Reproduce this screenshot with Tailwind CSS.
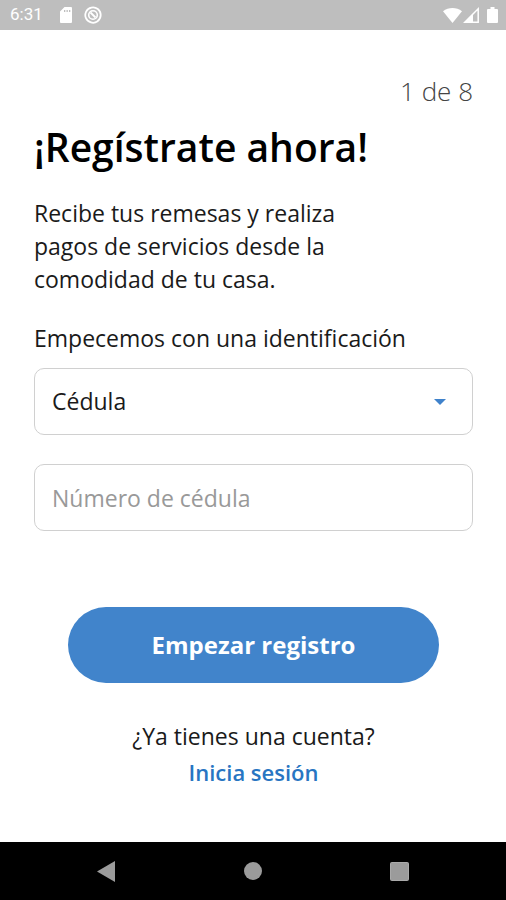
<!DOCTYPE html>
<html lang="es">
<head>
<meta charset="utf-8">
<meta name="viewport" content="width=device-width, initial-scale=1">
<title>Regístrate</title>
<script src="https://cdn.jsdelivr.net/npm/@tailwindcss/browser@4"></script>
</head>
<body class="flex min-h-screen flex-col bg-white font-['Open_Sans','Lato',sans-serif] text-[23px] text-[#1a1a1a]">
  <header class="flex h-[30px] items-center justify-between bg-[#bebebe] pr-2 pl-[10px] text-white">
    <div class="flex items-center gap-3">
      <span class="w-[38px] font-['Roboto',sans-serif] text-[17px]">6:31</span>
      <svg class="h-4 w-3" viewBox="0 0 12 16" fill="currentColor" aria-hidden="true"><path fill-rule="evenodd" d="M4.500 0H11a1 1 0 0 1 1 1v14a1 1 0 0 1-1 1H1a1 1 0 0 1-1-1V4.500zM4 3v2h1.300V3zM6.500 3v2h1.300V3zM9 3v2h1.300V3z"/></svg>
      <svg class="h-[18px] w-[18px]" viewBox="0 0 18 18" fill="none" stroke="currentColor" aria-hidden="true"><path d="M13.500 15.300A7.700 7.700 0 1 1 16.700 9c0 2.500-1.200 4.600-3.200 6.300z" stroke-width="1.800"/><circle cx="9" cy="9" r="4.300" stroke-width="1.600"/><path d="M6.500 6.500l5 5" stroke-width="1.800"/></svg>
    </div>
    <div class="flex items-center">
      <svg class="h-[15px] w-[19px]" viewBox="0 0 19 15" fill="currentColor" aria-hidden="true"><path d="M9.500 15L0 3.300C5.500-1 13.500-1 19 3.300z"/></svg>
      <svg class="ml-px h-4 w-4" viewBox="0 0 16 16" aria-hidden="true"><path d="M1.800 15.200L15.200 1.800v13.400z" fill="none" stroke="currentColor" stroke-width="1.500"/><path d="M1 15.500L10 6.500v9z" fill="currentColor"/></svg>
      <svg class="ml-2 h-4 w-[11px]" viewBox="0 0 11 16" fill="currentColor" aria-hidden="true"><path d="M3.500 0h4v2H10a1 1 0 0 1 1 1v12a1 1 0 0 1-1 1H1a1 1 0 0 1-1-1V3a1 1 0 0 1 1-1h2.500z"/></svg>
    </div>
  </header>

  <main class="flex flex-1 flex-col pr-[33px] pl-[34px] pt-[45px] pb-[52px]">
    <p class="text-right text-[26px] leading-8 font-light text-[#444]">1 de 8</p>
    <h1 class="mt-4 text-[39px] leading-[48px] font-semibold text-black">¡Regístrate ahora!</h1>
    <p class="mt-[26px] max-w-[330px] leading-[33px]">Recibe tus remesas y realiza pagos de servicios desde la comodidad de tu casa.</p>
    <form class="mt-[26px] flex flex-col">
      <label for="tipo" class="leading-[33px]">Empecemos con una identificación</label>
      <div class="relative mt-[13px]">
        <select id="tipo" class="block h-[67px] w-full appearance-none rounded-[10px] border border-[#d0d0d0] bg-white px-[17px] text-[#1a1a1a]">
          <option>Cédula</option>
        </select>
        <svg class="pointer-events-none absolute top-[31px] right-[27px] h-[6px] w-3" viewBox="0 0 12 6" fill="#3f82cb" aria-hidden="true"><path d="M0 0h12L6 6z"/></svg>
      </div>
      <input type="text" aria-label="Número de cédula" placeholder="Número de cédula" class="mt-[29px] h-[67px] w-full rounded-[10px] border border-[#d0d0d0] bg-white px-[17px] placeholder:text-[#999]">
      <button type="submit" class="mx-[34px] mt-[76px] h-[76px] rounded-full bg-[#4184cb] text-[24px] font-bold text-white">Empezar registro</button>
    </form>
    <p class="mt-[35px] text-center leading-9">¿Ya tienes una cuenta?</p>
    <a href="#" class="self-center text-[22px] leading-9 font-semibold text-[#2875c2]">Inicia sesión</a>
  </main>

  <nav class="flex h-[58px] items-center justify-between bg-black px-[97px]" aria-label="Sistema">
    <button type="button" aria-label="Atrás"><svg class="h-[21px] w-[18px]" viewBox="0 0 18 21" fill="#9b9b9b"><path d="M18 0v21L0 10.500z"/></svg></button>
    <button type="button" aria-label="Inicio"><svg class="h-[18px] w-[18px]" viewBox="0 0 18 18" fill="#9b9b9b"><circle cx="9" cy="9" r="9"/></svg></button>
    <button type="button" aria-label="Recientes"><svg class="h-[19px] w-[19px]" viewBox="0 0 19 19"><rect x=".5" y=".5" width="18" height="18" rx="1" fill="#9b9b9b" stroke="#aaa"/></svg></button>
  </nav>
</body>
</html>
